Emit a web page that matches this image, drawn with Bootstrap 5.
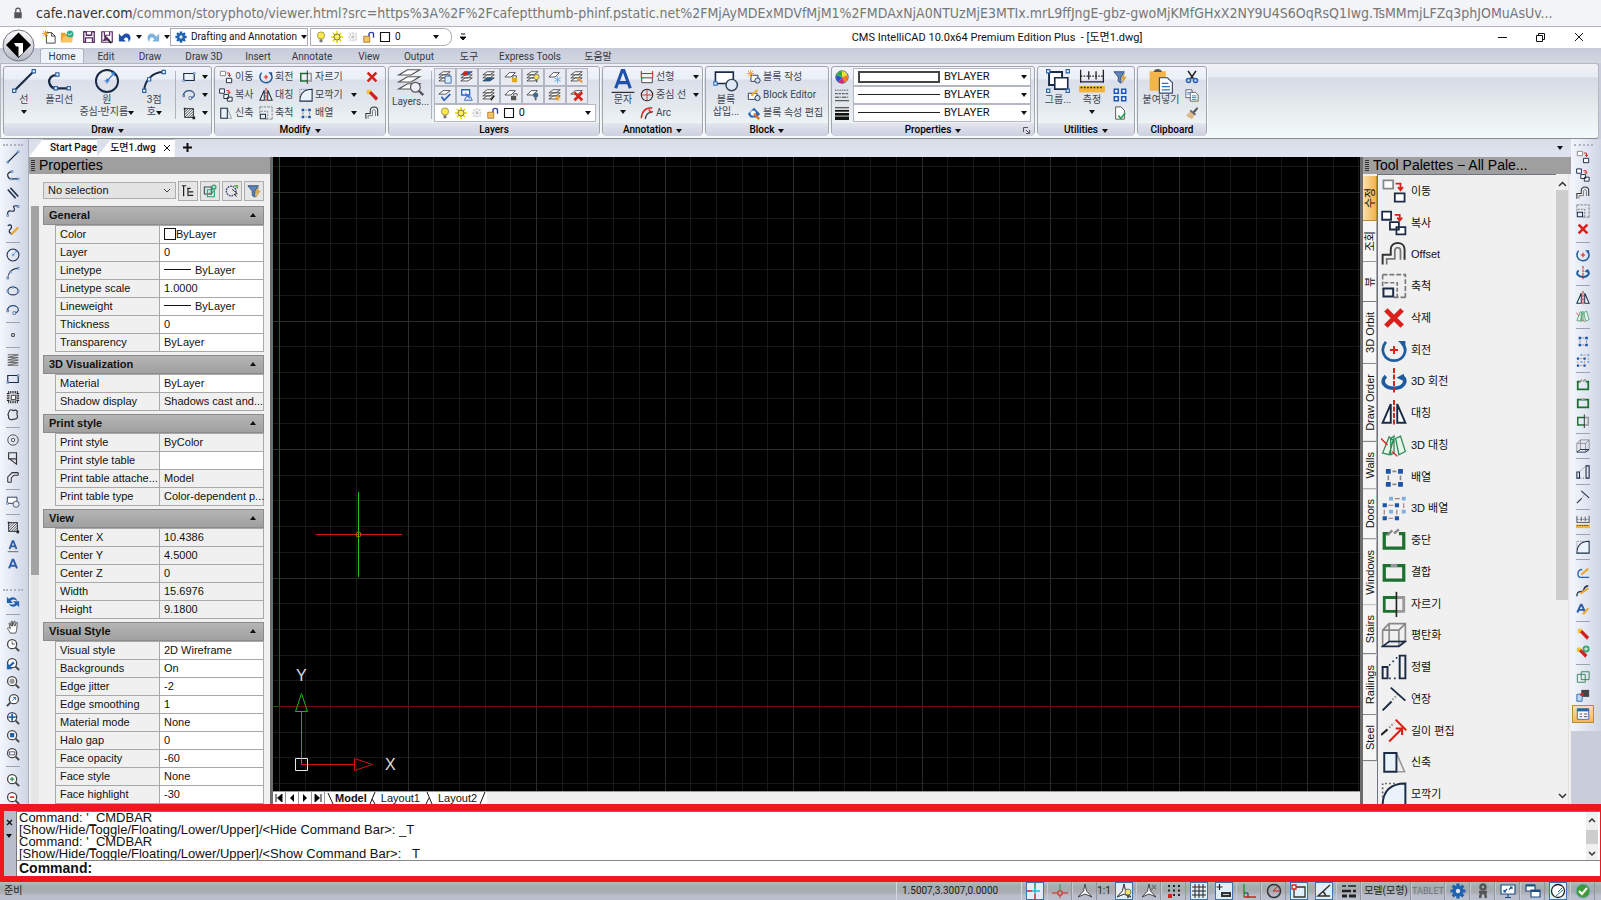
<!DOCTYPE html>
<html lang="ko">
<head>
<meta charset="utf-8">
<meta name="viewport" content="width=device-width, initial-scale=1">
<title>CMS IntelliCAD</title>
<link href="https://cdn.jsdelivr.net/npm/bootstrap@5.3.0/dist/css/bootstrap.min.css" rel="stylesheet">
<script src="https://cdn.jsdelivr.net/npm/bootstrap@5.3.0/dist/js/bootstrap.bundle.min.js"></script>
<style>
:root{--ui:Roboto,"Noto Sans CJK KR",sans-serif;--gulim:"Liberation Sans","Noto Sans CJK KR",sans-serif}
body{height:100vh;overflow:hidden;font:10px/12px var(--ui);color:#111;background:#c9cdd9}
button{border:0;background:none;padding:0;color:inherit;font:inherit}
a{color:inherit;text-decoration:none}
select{appearance:none;border:0;background:transparent;padding:0;color:inherit;font:inherit;outline:0}
svg{display:block;flex:none}
.i12{width:12px;height:12px}.i14{width:14px;height:14px}.i16{width:16px;height:16px}.i26{width:26px;height:26px}.i28{width:28px;height:28px}
.caret{width:0;height:0;border:3px solid transparent;border-top:4px solid #111;border-bottom:0;flex:none;display:inline-block}
.urlbar{height:27px;background:#f2f4f7;border-bottom:1px solid #b4b6ba;color:#777;font:14px/26px "DejaVu Sans Condensed","Open Sans",sans-serif;padding-left:12px}
.urlbar b{font-weight:400;color:#333}
.titlebar{height:21px;background:#fff;padding-left:42px}
.apptitle{font:11px/21px var(--ui);padding-left:30px}
.winbtns{gap:29px;padding-right:17px}
.qcombo{height:18px;border:1px solid #a9acb5;background:#fff}
.wspace{width:138px}.qlayer{width:142px;margin-left:2px;border-radius:0 8px 8px 0}
.appbtn{position:absolute;left:2px;top:29px;z-index:3}
.apptabs{height:15px;background:linear-gradient(#c8ccda,#d3d7e2);padding-left:40px;font:10px/17px var(--ui);color:#35383f}
.apptabs a{text-align:center}
.apptabs a.on{background:#eef3fb;border:1px solid #b0b4c0;border-bottom:0;border-radius:3px 3px 0 0;line-height:15px}
.w44{width:44px}.w64{width:64px}.w50{width:50px}.w72{width:72px}
.ribbon{height:76px;margin-right:2px;padding:2px 2px 3px;gap:2px;background:linear-gradient(#eef1f6 0,#e8ebf2 13px,#d6dae5 14px,#e9eeee 50px,#f3fbfa 74px);border:1px solid #b5b8c0;border-bottom:1px solid #888b92;border-radius:0 3px 3px 0}
.panelx{border:1px solid #a2a5ae;border-radius:3px;background:linear-gradient(#f1f4fa 0,#eaeef6 12px,#dadfeb 13px,#e4e9ee 40px,#eff6f6 58px);box-shadow:1px 1px 0 #f8f9fb}
.pw1{width:209px}.pw2{width:172px}.pw3{width:212px}.pw4{width:101px}.pw5{width:124px}.pw6{width:204px}.pw7{width:98px}.pw8{width:70px}
.ptitle{height:13px;font:500 10px/13px var(--ui);color:#000;background:linear-gradient(#e3e6ef,#cdd0de);border-radius:0 0 3px 3px;position:relative}
.pbody{height:56px;padding:1px 3px}
.big{color:#3f4450;line-height:12px;text-align:center;display:flex;flex-direction:column;align-items:center}
.vsep{width:1px;background:#aeb3c0;margin:3px 2px}
.trow{display:flex;align-items:center;gap:2px;height:18px;color:#3f4450;white-space:nowrap}
.w34{width:34px}.w38{width:38px}.w58{width:58px}.w40{width:40px}
.lbtn{width:22px;height:18px;border:1px solid #b3b7c3;background:#e8ebf2;display:flex;align-items:center;justify-content:center}
.pcombo{height:18px;background:#fff;border:1px solid #b3b7c3;padding-right:3px;font:11px/16px var(--ui)}
.colorbox{border:2px solid #444;width:82px;height:12px}
.rule{width:82px;height:1px;background:#222}
.doctabs{height:18px;background:linear-gradient(#d9dde8,#e0e4ee);font:500 10px/18px var(--ui)}
.doctab{background:#fff;border-top:1px solid #b5b8c4;display:flex;align-items:center;height:18px;gap:7px}
.cutl{clip-path:polygon(14px 0,100% 0,100% 100%,0 100%);padding-left:21px}
.cutl+.cutl{padding-left:13px}
.sidebar{background:linear-gradient(90deg,#f3f6fc,#dde2ef 60%,#cfd5e4)}
.side-l{width:29px;border-right:1px solid #a9aebc;padding-right:3px}
.side-r{padding:0 6px 8px 0}
.tgroup{display:flex;flex-direction:column;align-items:center;justify-content:space-between}
.g1{min-height:425px}.g2{min-height:214px}.g3{min-height:575px}
.tgroup button{height:18px;width:22px;display:flex;align-items:center;justify-content:center}
.tgroup button.on{background:linear-gradient(#f6dfae,#f1b95a);border:1px solid #b98b3d}
.tgroup hr{width:14px;height:1px;margin:3px 0;border:0;background:#9ea3b0;opacity:1}
.dots{height:0;border-top:2px dotted #aeb3c0;margin:5px 2px 2px 3px}
.ptop{background:#9f9f9f;height:17px;font:14px/17px var(--gulim);color:#000;padding-left:2px;gap:4px}
.grip{width:4px;height:11px;background:repeating-linear-gradient(#333 0 1px,transparent 1px 2px)}
.props{width:241px;background:#f0f0f0;font:11px/17px var(--gulim)}
.selrow{padding:7px 0 5px 14px;gap:2px}
.selbox{width:133px;height:17px;border:1px solid #adadad;background:#e3e3e3;padding:0 4px}
.sq20{width:20px;height:20px;border:1px solid #adadad;background:#e6e6e6;display:flex;align-items:center;justify-content:center}
.pscroll{width:8px;background:linear-gradient(#a3a3a3 0 369px,#e6e6e6 369px);margin-left:2px}
#sections{width:221px;margin-left:4px}
.sec{height:19px;border:1px solid #8b8b8b;background:linear-gradient(#b5b5b5,#a0a0a0);font:bold 11px/17px var(--gulim);padding:0 7px 0 5px;display:flex;justify-content:space-between;align-items:center;width:100%}
.up{border:3px solid transparent;border-bottom:4px solid #111;border-top:0}
.ptab{width:209px;table-layout:fixed;border-collapse:collapse;margin:0 0 3px 12px}
.ptab th,.ptab td{height:18px;padding:0 0 0 4px;line-height:16px;font-weight:400;border:1px solid #a8a8a8;white-space:nowrap}
.ptab th{background:#f0f0f0;width:104px}.ptab td{background:#fff}.ptab td.ro{background:#f0f0f0}
.swatch{display:inline-block;width:12px;height:12px;border:1px solid #111;vertical-align:-2px}
.dash{display:inline-block;width:27px;height:1px;background:#111;vertical-align:4px;margin-right:4px}
.canvasx{background:#000;min-height:0}
.edge{width:3px;background:#6d6d6d}
.laytabs{height:13px;background:#f0f0f0;font:11px/13px var(--gulim);border-top:1px solid #999}
.laytabs button{border-right:1px solid #999;width:13px;height:12px;display:flex;align-items:center;justify-content:center;background:#fff}
.slash{width:10px;height:12px}
.palette{width:208px;background:#f0f0f0}
.vt{width:14px;font:11px/14px var(--gulim);padding-top:2px}
.vt button{writing-mode:vertical-rl;text-orientation:sideways;transform:rotate(180deg);width:14px;padding:10px 0;min-height:40px;border-top:1px solid #777;border-left:1px solid #aaa;line-height:12px;background:#f6f6f6}
.vt button.on{background:linear-gradient(90deg,#f3b24c,#fbe0ae);min-height:45px;border-color:#c08b35}
.plist{margin:0 0 -6px;padding:0 0 0 3px;list-style:none;font:11px/14px var(--gulim)}
.plist li{flex:1 1 0;display:flex;align-items:center;gap:4px;min-height:0}
.plist svg{overflow:visible}
.track{width:13px;background:#f0f0f0;margin-right:2px;border-right:1px solid #e2e2e2}
.thumbx{flex:0 0 66%;background:#cdcdcd}
.side30{width:30px}
.cmd{height:78px;border:solid #ef161d;border-width:7px 1px 6px 4px;background:#fff;font:13px/12px var(--gulim)}
.gut{width:13px;background:#b9bcc9;border-right:1px solid #777;padding-right:2px}
.log{border-top:1px solid #777;border-bottom:1px solid #888;height:50px;white-space:pre;padding-left:2px;overflow:hidden}
.logbar{width:12px;background:#f0f0f0;margin-right:2px}.logbar div{width:12px;height:14px;background:#cdcdcd}
.cline{height:15px;font:bold 14px/15px var(--gulim);padding-left:2px}
.cline input{border:0;outline:0;padding:0;height:14px;font:13px/14px var(--gulim)}
.status{height:18px;background:linear-gradient(#b6b9c0 0,#a5aaad 5px,#a9adb1 10px,#bbbecd 14px);font:10px/18px var(--ui);color:#222;padding-right:6px}
.status button{width:25px;height:18px;border-left:1px solid #c7cad3;border-right:1px solid #92959c;display:flex;align-items:center;justify-content:center}
.status button.on{background:#dff0fb;border:1px solid #3d74ad;width:18px;margin:0 3px 0 4px}
.status button.txt{width:50px}
.status button.txt.s{width:34px;font-size:9px}
.status button.one{width:14px;border:0}
.coord{width:126px;margin-left:5px;border-left:1px solid #d5d7de;border-right:1px solid #d5d7de;padding-left:5px}
</style>
</head>
<body class="d-flex flex-column">
<svg width="0" height="0" class="position-absolute" aria-hidden="true"><defs>
<g id="stk" fill="#fff" stroke="#444" stroke-width="1"><path d="M1 12.500h8l5-3.500H6zM1 9h8l5-3.500H6zM1 5.500h8L14 2H6z"/></g>
<symbol id="line" viewBox="0 0 16 16" fill="#fff" stroke="#1c2b45"><path d="M2 14 14 2" stroke-width="1.300"/><path d="M1 13h2v2H1zM13 1h2v2h-2z" stroke="#2a62a8" stroke-width=".7"/></symbol>
<symbol id="pline" viewBox="0 0 16 16" fill="none" stroke="#1c2b45"><path d="M7 4.500C3 4 1.500 7 2 9s2 3.500 4 3.500h8" stroke-width="1.400"/><path d="M6 3h2v2H6zM5 11.500h2v2H5zM13 11.500h2v2h-2z" fill="#fff" stroke="#2a62a8" stroke-width=".7"/></symbol>
<symbol id="circle" viewBox="0 0 16 16" fill="none" stroke="#1c2b45"><circle cx="8" cy="8" r="6.800" stroke-width="1.200"/><path d="m8 8 4.500-5M6.500 8h3M8 6.500v3M10.500 3h2v2" stroke="#2a72c8" stroke-width=".7"/></symbol>
<symbol id="arc" viewBox="0 0 16 16" fill="none" stroke="#1c2b45"><path d="M2 14C2 8 7 2.500 14 2.500" stroke-width="1.200"/><path d="M1 13h2v2H1zM4 6h2v2H4zM13 1.500h2v2h-2z" fill="#fff" stroke="#2a62a8" stroke-width=".7"/></symbol>
<symbol id="rect" viewBox="0 0 16 16" fill="none" stroke="#1c2b45"><path d="M2 4h12v8H2z" stroke-width="1.300"/><path d="M1 11h2v2H1zM13 3h2v2h-2z" fill="#fff" stroke="#2a62a8" stroke-width=".7"/></symbol>
<symbol id="earc" viewBox="0 0 16 16" fill="none" stroke="#2a4f86" stroke-width="1.400"><path d="M2 9C1 5 5 3 8 3s7 2 6 5.500c-.5 2-3 3-5 3"/><path d="M1 8h2v2H1zM8 10h3v3H8z" fill="#fff" stroke-width=".8"/></symbol>
<symbol id="ellipse" viewBox="0 0 16 16" fill="none" stroke="#2a3f66" stroke-width="1.300"><ellipse cx="8" cy="8" rx="6" ry="4.500"/><path d="M1 7h2v2H1zM7 2.500h2v2H7zM13 7h2v2h-2z" fill="#fff" stroke="#2a62a8" stroke-width=".7"/></symbol>
<symbol id="hatch" viewBox="0 0 16 16" fill="none" stroke="#222"><path d="M3 3h10v10H3z"/><path d="m3 7 4-4M3 10l7-7M3 13 13 3M6 13l7-7M9 13l4-4" stroke-width=".8"/><path d="M2 2h2v2H2zM12 12h3v3h-3z" fill="#222" stroke="none"/></symbol>
<symbol id="move" viewBox="0 0 16 16" fill="#fff" stroke="#1c2b45" stroke-width="1.100"><path d="M1.500 1.500h6v5h-6z" stroke="#888"/><path d="M8.500 9.500h6v5h-6z"/><path d="M9 3.500h3V7M10.500 5.500 12 7.500l1.500-2" fill="none" stroke="#d9201a"/></symbol>
<symbol id="copy" viewBox="0 0 16 16" fill="#fff" stroke="#1c2b45" stroke-width="1.100"><path d="M.7 1h5.500v5H.7zM5.500 7.500H11V12H5.500zM9.500 10.500H15V15H9.500z"/><path d="M8.500 3h3v3M10 4.700l1.500 1.800L13 4.700" fill="none" stroke="#d9201a"/></symbol>
<symbol id="offset" viewBox="0 0 16 16" fill="none" stroke="#333"><path d="M1 14.500V8.500h5V5c0-5 8.500-5 8.500 0v6.500" stroke-width="1.200"/><path d="M3.500 14.500V11H8.500V6c0-2.500 3.500-2.500 3.500 0v5.500" stroke="#777" stroke-width="1.100"/></symbol>
<symbol id="scale" viewBox="0 0 16 16" fill="none" stroke="#777"><path d="M1 1h14v14" stroke-dasharray="3 1.200"/><path d="M1 1v9M15 15H8" stroke-dasharray="3 1.200"/><path d="M2 6h8v9" stroke-dasharray="2.500 1.200"/><path d="M1.500 9.500h6v5h-6z" stroke="#1c2b45" stroke-width="1.200"/></symbol>
<symbol id="del" viewBox="0 0 16 16"><path d="m3 3 10 10M13 3 3 13" stroke="#d9201a" stroke-width="3"/></symbol>
<symbol id="rot" viewBox="0 0 16 16" fill="none"><path d="M3 3C-1 8 2 14.500 8 14.500S17 8 13 4" stroke="#1f5c9e" stroke-width="1.700"/><path d="M10.500 2.500H15V7z" fill="#1f5c9e"/><path d="M8 5.500v5M5.500 8h5" stroke="#d9201a" stroke-width="1.200"/></symbol>
<symbol id="rot3" viewBox="0 0 16 16" fill="none"><path d="M3 5C-1 9 3 12.500 8 12.500S17 8.500 13 5" stroke="#1f5c9e" stroke-width="2.200"/><path d="M9.500 6 14 3.500V8z" fill="#1f5c9e"/><path d="M8 0v16" stroke="#d9201a" stroke-width="1.200" stroke-dasharray="3 1"/></symbol>
<symbol id="mir" viewBox="0 0 16 16" fill="#fff" stroke="#1c2b45" stroke-width="1.200"><path d="M6 2.500V14H1zM10 2.500V14h5z"/><path d="M8 0v16" stroke="#d9201a" stroke-dasharray="3 1"/></symbol>
<symbol id="mir3" viewBox="0 0 16 16" fill="#e6f5ea" stroke="#2e8b57" stroke-width=".8"><path d="m1 13 4-10 2.500 2L5 14zM6 14V4l2-1.500V13zM9 4l3-1.500L15 12l-4 2z"/><path d="m0 4 4 4M7 12l3 3" stroke="#d9201a"/></symbol>
<symbol id="array" viewBox="0 0 16 16"><path d="M3 3h3v3H3zM10.500 3h3v3h-3zM3 11h3v3H3zM10.500 11h3v3h-3z" fill="#1f55a8"/><path d="M7 4.500h2.500M7 12.500h2.500M4.500 7v3M12 7v3" stroke="#888"/></symbol>
<symbol id="array3" viewBox="0 0 16 16"><path d="M1 5h2.600v2.600H1zM8.500 5h2.600v2.600H8.500zM1 13h2.600v2.600H1zM8.500 13h2.600v2.600H8.500z" fill="#1f55a8"/><path d="M5 1h2.400v2.400H5zM12.800 1h2.400v2.400h-2.400zM5 9h2.400v2.400H5zM12.800 9h2.400v2.400h-2.400z" fill="#7fb0e0"/><path d="M4.500 6.300h3M4.500 14.300h3M2 9v3M9.700 9v3M8.500 2.200h3M14 5v3" stroke="#a77" stroke-width=".7"/></symbol>
<symbol id="brk" viewBox="0 0 16 16" fill="none"><path d="M5 4H2v9h12V4h-3" stroke="#1d7030" stroke-width="2"/><path d="m4 5 3-3M8 4l3-2.500" stroke="#888" stroke-width="1.500"/></symbol>
<symbol id="joi" viewBox="0 0 16 16" fill="none"><path d="M2 4h12v9H2z" stroke="#1d7030" stroke-width="2"/><path d="M6 4h4" stroke="#999" stroke-width="2"/></symbol>
<symbol id="trim" viewBox="0 0 16 16" fill="none" stroke-width="1.700"><path d="M9.500 4H14v8.500H9.500" stroke="#999"/><path d="M9.500 4H2v8.500h7.500" stroke="#1d7030"/><path d="M9.500.5v15.500" stroke="#222" stroke-width="1"/></symbol>
<symbol id="flat" viewBox="0 0 16 16" fill="none" stroke="#888" stroke-width="1"><path d="M1 5h10v10M1 15V5l4-4h10v10l-4 4M11 5l4-4M5 1v11h10"/><path d="m1 15 4-3h10l-4 3z" stroke="#1c2b45"/></symbol>
<symbol id="align" viewBox="0 0 16 16" fill="none" stroke="#1c2b45" stroke-width="1.200"><path d="M1 8h3v7H1zM11.500 1H15v14h-3.500z"/><path d="m5 7 5-5M5 15h5" stroke-dasharray="1 2" stroke-width="1"/></symbol>
<symbol id="ext" viewBox="0 0 16 16" fill="none" stroke="#1c2b45" stroke-width="1.200"><path d="m6 1 9 8M1 15l5.500-5.500"/><path d="m7 8.500 3-3" stroke="#999" stroke-dasharray="1 1"/></symbol>
<symbol id="len" viewBox="0 0 16 16" fill="none" stroke="#d9201a" stroke-width="1.300"><path d="m9 1 6.500 6.500M5 14.500l8-8M9 6.500h4v4"/><path d="m0 10.500 4-3.500" stroke="#222"/><path d="m5 6 3-3" stroke="#999" stroke-dasharray="1 1"/></symbol>
<symbol id="str" viewBox="0 0 16 16" fill="#e9f1fb" stroke="#1c2b45"><path d="m9.500 2.500 5 11.500h-5" fill="none" stroke="#999"/><path d="M2 2.500h7.500V14H2z" stroke-width="1.200"/></symbol>
<symbol id="fil" viewBox="0 0 16 16" fill="#eaf3fc" stroke="#1c2b45" stroke-width="1.200"><path d="M1 15C1 6 6 1.500 15 1.500V15z"/><path d="M1 10V1.500h8" fill="none" stroke="#555" stroke-dasharray="1 1.500" stroke-width="1"/></symbol>
<symbol id="expl" viewBox="0 0 16 16"><path d="M2 2h5v5H2z" fill="#f4c531"/><path d="m4.500 6 2.500-2.500 8 8-2.500 3z" fill="#d02020"/></symbol>
<symbol id="explp" viewBox="0 0 16 16"><path d="M1 3h5v5H1z" fill="#f4c531"/><path d="m3.500 7 2.500-2.500 7 7-2.500 3z" fill="#d02020"/><circle cx="11.500" cy="4.500" r="4" fill="#2ba36c"/><path d="M9 4.500h5M11.500 2v5" stroke="#fff"/></symbol>
<symbol id="layers" viewBox="0 0 16 16" fill="#fff" stroke="#555" stroke-width=".7"><path d="M1 12h7l5-3H6zM1 8h7l5-3H6zM1 4h7l5-3H6z"/><circle cx="10.500" cy="11" r="2.800" fill="#eef"/><path d="m12.500 13 2.500 2.500" stroke-width="1.400"/></symbol>
<symbol id="l1" viewBox="0 0 16 16"><use href="#stk"/><path d="M8 7h7v8H8z" fill="#dfeaf8" stroke="#2a62a8"/></symbol>
<symbol id="l2" viewBox="0 0 16 16"><use href="#stk"/><path d="M1 5.500h8L14 2H6z" fill="#2a62a8"/><circle cx="6" cy="4" r="2.500" fill="#d9201a"/></symbol>
<symbol id="l3" viewBox="0 0 16 16"><use href="#stk"/><path d="M1 12.500h8l5-3.500H6z" fill="#1f5c8e"/></symbol>
<symbol id="l4" viewBox="0 0 16 16"><path d="M1 8h7l5-5H6z" fill="#fff" stroke="#444"/><path d="M9 9h6v5H9z" fill="#e3a918"/><path d="M10 9V6.500h4V9" stroke="#555" fill="none"/></symbol>
<symbol id="l5" viewBox="0 0 16 16"><use href="#stk"/><circle cx="12" cy="8" r="3" fill="#f7e05a" stroke="#887"/><path d="M11 11h2v3h-2z" fill="#555"/></symbol>
<symbol id="l6" viewBox="0 0 16 16"><path d="M1 8h7l5-5H6z" fill="#fff" stroke="#444"/><path d="M11 7v8M7.500 9l7 4M14.500 9l-7 4" stroke="#5fa8e8"/></symbol>
<symbol id="l7" viewBox="0 0 16 16"><use href="#stk"/><path d="m8 9 6 5" stroke="#d89a4a" stroke-width="2.500"/></symbol>
<symbol id="l8" viewBox="0 0 16 16"><path d="M1 7h8l5-4H6z" fill="#fff" stroke="#444"/><path d="m4 10 3 4 7-7" stroke="#2a62b8" stroke-width="2" fill="none"/></symbol>
<symbol id="l9" viewBox="0 0 16 16"><path d="M2 2h9v6H2z" fill="#fff" stroke="#2a62b8" stroke-width="1.500"/><path d="m6 5 5 7M5 14h9l-2-4H7z" stroke="#2a62b8" fill="#dfeaf8"/></symbol>
<symbol id="l10" viewBox="0 0 16 16"><use href="#stk"/><path d="M10 14l4-5" stroke="#111" stroke-width="1.500"/></symbol>
<symbol id="l11" viewBox="0 0 16 16"><path d="M1 8h7l5-5H6z" fill="#fff" stroke="#444"/><path d="M8 9h6v5H8z" fill="#555"/><path d="M11 9V6.500h4V9" stroke="#555" fill="none"/></symbol>
<symbol id="l12" viewBox="0 0 16 16"><path d="M1 8h7l5-5H6z" fill="#fff" stroke="#444"/><circle cx="11" cy="8" r="3" fill="#456a8c"/><path d="M10 11h2v3h-2z" fill="#555"/></symbol>
<symbol id="l13" viewBox="0 0 16 16"><use href="#stk"/><path d="M11 8v7M7.500 11.500h7M9 9l4 5M13 9l-4 5" stroke="#f0a020"/></symbol>
<symbol id="l14" viewBox="0 0 16 16"><path d="M1 7h8l5-4H6z" fill="#fff" stroke="#444"/><path d="m5 5 9 9M14 5l-9 9" stroke="#d9201a" stroke-width="3"/></symbol>
<symbol id="bulb" viewBox="0 0 16 16"><circle cx="8" cy="6" r="4.800" fill="#fbe94e" stroke="#8a8430"/><path d="M6 11h4v4H6z" fill="#777"/></symbol>
<symbol id="sun" viewBox="0 0 16 16"><path d="M8 0v16M0 8h16M2.500 2.500l11 11M13.500 2.500l-11 11" stroke="#e8d800" stroke-width="2"/><circle cx="8" cy="8" r="4" fill="#fff04a" stroke="#555"/></symbol>
<symbol id="frz" viewBox="0 0 16 16"><path d="M3 3h10v10H3z" fill="none" stroke="#bbb" stroke-dasharray="1 1"/><path d="M8 2v12M2 8h12M4 4l8 8M12 4l-8 8" stroke="#aaa" stroke-dasharray="2 1"/></symbol>
<symbol id="unl" viewBox="0 0 16 16"><path d="M1 7h8v8H1z" fill="#f2c46a" stroke="#a06a10"/><path d="M8 7V4c0-3 6-3 6 0v5" fill="none" stroke="#2a3f9a" stroke-width="1.800"/></symbol>
<symbol id="wsq" viewBox="0 0 16 16"><path d="M2 2h12v12H2z" fill="#fff" stroke="#111" stroke-width="1.500"/></symbol>
<symbol id="bigA" viewBox="0 0 16 16" fill="none" stroke="#2050a8"><path d="m3.500 12.500 4-11h1l4 11M5 9h6" stroke-width="1.900"/><path d="M1 15h14" stroke="#222" stroke-width=".7"/></symbol>
<symbol id="smA" viewBox="0 0 16 16" fill="none" stroke="#2a5caa" stroke-width="2.200"><path d="m3.500 13 4-10h1l4 10M5 10h6"/></symbol>
<symbol id="undA" viewBox="0 0 16 16" fill="none" stroke="#2a5caa" stroke-width="2"><path d="m4 11.500 3.500-9h1l3.500 9M5 8.500h6"/><path d="M2 14.500h12" stroke="#555" stroke-width="1"/></symbol>
<symbol id="dim" viewBox="0 0 16 16" fill="none" stroke="#d9201a"><path d="M1.500 1v8M14.500 1v8M1.500 4h13" stroke-width="1.200"/><path d="M2 9h12v5.500H2z" fill="#fff" stroke="#333"/></symbol>
<symbol id="ctr" viewBox="0 0 16 16" fill="none" stroke="#222"><circle cx="8" cy="8" r="6.500" stroke-width="1.200"/><path d="M8 1v14M1 8h14" stroke="#d9201a"/></symbol>
<symbol id="adim" viewBox="0 0 16 16" fill="none" stroke="#d9201a" stroke-width="1.500"><path d="M1.500 14C2 6 6 2 14 2"/><path d="M6 15c.5-5 3-8 9-8.500" stroke="#444"/><path d="M10 4l3 4" /></symbol>
<symbol id="blk" viewBox="0 0 16 16" fill="#fff" stroke="#1c2b45"><path d="M1.500 2.500h11v7h-11z"/><circle cx="11.500" cy="10.500" r="3.500" fill="#e0e9f4" stroke="#345" stroke-width=".9"/><path d="M.5 8.500h2v2h-2z" stroke="#2a72c8" stroke-width=".7"/></symbol>
<symbol id="blkn" viewBox="0 0 16 16" fill="#fff" stroke="#1c2b45"><path d="M4.500 6h8v7h-8z"/><circle cx="12" cy="12" r="3" fill="#cfe0f2"/><path d="M4 0v8M0 4h8M1 1l6 6M7 1 1 7" stroke="#f0a020"/></symbol>
<symbol id="blke" viewBox="0 0 16 16" fill="#fff" stroke="#1c2b45"><path d="M1.500 6h10v7h-10z"/><circle cx="12" cy="11.500" r="3" fill="#cfe0f2"/><path d="M5 9l7-7" stroke="#e8b23a" stroke-width="2.500"/></symbol>
<symbol id="blka" viewBox="0 0 16 16"><path d="m1 9 7-7 7 7-4 4H4z" fill="#2a62b8"/><circle cx="7" cy="8" r="3" fill="#fff"/><path d="m8 9 6 6" stroke="#e07020" stroke-width="2.500"/></symbol>
<symbol id="wheel" viewBox="0 0 16 16"><circle cx="8" cy="8" r="7" fill="#eee" stroke="#333"/><path d="M8 8V1.500A6.500 6.500 0 0 1 14 6z" fill="#f4e02a"/><path d="m8 8 6-2a6.500 6.500 0 0 1-3 8z" fill="#f08020"/><path d="m8 8 3 6a6.500 6.500 0 0 1-7 0z" fill="#d02a80"/><path d="m8 8-4 6A6.500 6.500 0 0 1 1.800 6z" fill="#2a50d0"/><path d="M8 8 1.800 6A6.500 6.500 0 0 1 8 1.500z" fill="#2ab04a"/></symbol>
<symbol id="ltyp" viewBox="0 0 16 16" stroke="#222"><path d="M0 2.500h16" stroke-dasharray="1 1"/><path d="M0 6.500h16" stroke-dasharray="3 1"/><path d="M0 10.500h16" stroke-dasharray="5 1 1 1"/><path d="M0 14.500h16"/></symbol>
<symbol id="lwt" viewBox="0 0 16 16" stroke="#111"><path d="M0 2h16"/><path d="M0 5.500h16" stroke-width="2"/><path d="M0 9.500h16" stroke-width="3"/><path d="M0 14h16" stroke-width="4"/></symbol>
<symbol id="grp" viewBox="0 0 16 16" fill="#fff" stroke="#1c2b45"><path d="M2.500 2.500h8v8h-8z" stroke-width="1.200"/><path d="M6 6h8v7H6z" stroke-width="1"/><path d="M1 1h2v2H1zM13 1h2v2h-2zM1 13h2v2H1zM13 13h2v2h-2z" stroke="#2a62a8" stroke-width=".7"/></symbol>
<symbol id="meas" viewBox="0 0 16 16" fill="none" stroke="#222"><path d="M1 1v8M15 1v8M1 8.500h14M6 2v5M10.500 2v5" stroke-width=".8"/><path d="M1 5h14" stroke-dasharray="1 .8" stroke-width=".7"/><path d="M0 11h16v4H0z" fill="#f2b43a" stroke="none"/><path d="M1 12h14" stroke-dasharray="1 1"/></symbol>
<symbol id="fun" viewBox="0 0 16 16"><path d="M1 2h12L9 8v7l-3-2V8z" fill="#5f85b8" stroke="#2a4a7a"/><path d="m13 4-4 6h3l-2 5 5-7h-3z" fill="#f2b43a" stroke="#a07010" stroke-width=".5"/></symbol>
<symbol id="gb" viewBox="0 0 16 16" fill="#fff" stroke="#1f55b8" stroke-width="1.800"><path d="M1.500 1.500H6V6H1.500zM10 1.500h4.500V6H10zM1.500 10H6v4.500H1.500zM10 10h4.500v4.500H10z"/></symbol>
<symbol id="dchk" viewBox="0 0 16 16" fill="#fff" stroke="#444"><path d="M3 1h6l4 4v10H3z"/><path d="m6 11 3 3 5-6" stroke="#2e9b57" stroke-width="2" fill="none"/></symbol>
<symbol id="paste" viewBox="0 0 16 16"><path d="M1 2h10v12H1z" fill="#f3b548"/><path d="M3.500 2.500C3.500 0 8.500 0 8.500 2.500z" fill="#555"/><path d="M7 6h5l3 3v6.500H7z" fill="#fff" stroke="#346" stroke-width=".7"/><path d="M8.500 9.500h4M8.500 11.500h5M8.500 13.500h5" stroke="#2a72c8" stroke-width=".7"/></symbol>
<symbol id="scis" viewBox="0 0 16 16" fill="none" stroke="#222" stroke-width="1.800"><path d="m3.500 1 6 9M12.500 1l-6 9"/><circle cx="4" cy="12" r="2.300" stroke="#1f5fc0"/><circle cx="12" cy="12" r="2.300" stroke="#1f5fc0"/></symbol>
<symbol id="cdoc" viewBox="0 0 16 16" fill="#fff" stroke="#556"><path d="M1 2h7v9H1z"/><path d="M6 5h6l3 3v7H6z"/><path d="M8 9h5M8 11h5M8 13h5M2.500 5h3M2.500 7h3" stroke="#2a72c8"/></symbol>
<symbol id="brush" viewBox="0 0 16 16"><path d="m9 6 5-5 1 2-4 5z" fill="#555"/><path d="m1 11 6-6 5 4-4 6z" fill="#e0b98a"/><path d="m6 5 6 5" stroke="#666" stroke-width="2"/></symbol>
<symbol id="newd" viewBox="0 0 16 16"><path d="M5 3h6l4 4v8H5z" fill="#fff" stroke="#333"/><path d="M11 3v4h4" fill="none" stroke="#333"/><path d="M4 0v8M0 4h8M1 1l6 6M7 1 1 7" stroke="#f0a020"/></symbol>
<symbol id="open" viewBox="0 0 16 16"><path d="M1 3h5l1 2h7v9H1z" fill="#e8a23a"/><path d="m1 14 3-7h11l-2 7z" fill="#f7c765"/><circle cx="11.500" cy="4.500" r="4" fill="#2fa98a"/><path d="m9 4 2 2 3-3" stroke="#fff" fill="none"/></symbol>
<symbol id="save" viewBox="0 0 16 16" fill="#fff" stroke="#5b2a66" stroke-width="1.500"><path d="M2 2h12v12H2z"/><path d="M5 2v4h6V2M4 14V9h8v5"/></symbol>
<symbol id="saveas" viewBox="0 0 16 16" fill="#fff" stroke="#5b2a66" stroke-width="1.400"><path d="M2 2h12v12H2z"/><path d="M5 2v4h6V2"/><path d="m5 7 8 8" stroke="#222" stroke-width="2"/><path d="M4 12l3-4 3 3z" fill="#5b2a66"/></symbol>
<symbol id="undo" viewBox="0 0 16 16"><path d="M1 4v9h8L6.500 10.500C9 7 12.500 8 12 14c5-5 1-12-4.500-9.500-1.500.7-2.500 2-3.500 3z" fill="#1f4fa8"/></symbol>
<symbol id="redo" viewBox="0 0 16 16"><path d="M15 4v9H7l2.500-2.500C7 7 3.500 8 4 14c-5-5-1-12 4.500-9.500 1.500.7 2.500 2 3.500 3z" fill="#7fb4dd"/></symbol>
<symbol id="gear" viewBox="0 0 16 16"><path d="M8 .5v15M.5 8h15M2.700 2.700l10.600 10.600M13.300 2.700 2.700 13.300" stroke="#1f62b0" stroke-width="3.200"/><circle cx="8" cy="8" r="5.500" fill="#1f62b0"/><circle cx="8" cy="8" r="2.200" fill="#dfe6f0"/></symbol>
<symbol id="lock" viewBox="0 0 16 16"><path d="M3 7h10v8H3z" fill="#555"/><path d="M5 7V4.500c0-4 6-4 6 0V7" fill="none" stroke="#555" stroke-width="1.600"/></symbol>
<symbol id="par" viewBox="0 0 16 16" stroke="#1c2b45" stroke-width="1.800"><path d="m2 4 9 10M5 2l9 10"/></symbol>
<symbol id="spl" viewBox="0 0 16 16" fill="none" stroke="#1c2b45" stroke-width="1.400"><path d="M2 14c-1-5 1-7 4-6s5-1 3-4 5-2 5-1"/><path d="M1 12h2v2H1zM13 2h2v2h-2z" fill="#fff" stroke="#2a62a8" stroke-width=".7"/></symbol>
<symbol id="free" viewBox="0 0 16 16" fill="none" stroke="#1c2b45" stroke-width="1.400"><path d="M2 3c5-3 5 2 3 4s-2 4 2 6"/><path d="m6 13 8-8" stroke="#e8a93a" stroke-width="2.500"/></symbol>
<symbol id="pt" viewBox="0 0 16 16"><path d="M6.500 6.500h3v3h-3z" fill="#fff" stroke="#222"/></symbol>
<symbol id="helix" viewBox="0 0 16 16" fill="none" stroke="#555"><path d="M2 2h12L2 5h12L2 8h12L2 11h12L2 14h12" stroke-width="1"/></symbol>
<symbol id="rgn" viewBox="0 0 16 16" fill="none" stroke="#222"><path d="M2.500 2.500h11v11h-11z" stroke-width="3" stroke-dasharray="1 1"/><path d="M6 6h5v5H6z" fill="#fff"/></symbol>
<symbol id="cloud" viewBox="0 0 16 16" fill="none" stroke="#333" stroke-width="1.300"><path d="M4 3c2-2 4 0 4 0s5-2 5 2c-2 2 1 3 0 6-2 3-4 1-5 2-3 1-6-1-5-4-2-2 0-3 1-6z"/></symbol>
<symbol id="donut" viewBox="0 0 16 16" fill="none" stroke="#444"><circle cx="8" cy="8" r="6"/><circle cx="8" cy="8" r="2"/></symbol>
<symbol id="wipe" viewBox="0 0 16 16" fill="none" stroke="#333" stroke-width="1.300"><path d="M3 2h9v7H3zM12 9v6L4 9"/></symbol>
<symbol id="mline" viewBox="0 0 16 16" fill="none" stroke="#333" stroke-width="1.200"><path d="M2 14V8l5-5h7M6 14V9l3-3h5M2 14h4M14 3v3"/></symbol>
<symbol id="regen" viewBox="0 0 16 16" fill="#1f62b0"><path d="M1 2v7h7L5.500 6.500C8 4 11 5 13 7 12 3 7 1 3.500 4.500z"/><path d="M15 14V7H8l2.500 2.500C8 12 5 11 3 9c1 4 6 6 9.500 2.500z"/></symbol>
<symbol id="hand" viewBox="0 0 16 16" fill="#fff" stroke="#444"><path d="M5 15c-1-3-4-5-3-6s2 0 3 1L3.500 4c0-1 1-1 1.500 0L6 7V2c0-1 1.500-1 1.500 0v5L9 2c0-1 1.500-1 1.500 0L10 7l2-4c.5-1 1.500 0 1 1-1 4 0 7-2 11z"/></symbol>
<symbol id="zm" viewBox="0 0 16 16" fill="#fff" stroke="#444" stroke-width="1.500"><circle cx="7" cy="7" r="5.200"/><path d="m11 11 4 4" stroke-width="2.200"/></symbol>
<symbol id="z1" viewBox="0 0 16 16"><use href="#zm"/><path d="M7 4v3h3" stroke="#444" fill="none"/></symbol>
<symbol id="z2" viewBox="0 0 16 16"><use href="#zm"/><path d="M1 7v7h6L5 11l5-4-2-2-4 4z" fill="#1f62b0"/></symbol>
<symbol id="z3" viewBox="0 0 16 16"><use href="#zm"/><circle cx="7" cy="7" r="3" fill="#999"/></symbol>
<symbol id="z4" viewBox="0 0 16 16"><circle cx="9" cy="7" r="5.200" fill="#fff" stroke="#444" stroke-width="1.500"/><path d="m5 11-4 4" stroke="#444" stroke-width="2.200"/><path d="m7 9 4-4M8 5h3v3" stroke="#1f62b0" fill="none"/></symbol>
<symbol id="z5" viewBox="0 0 16 16"><use href="#zm"/><path d="M7 3v8M3 7h8" stroke="#1f62b0" stroke-width="2"/></symbol>
<symbol id="z6" viewBox="0 0 16 16"><use href="#zm"/><path d="M4.500 4.500h5v5h-5z" fill="#1f62b0"/></symbol>
<symbol id="z7" viewBox="0 0 16 16"><use href="#zm"/><path d="M4 5.500h6v3.500H4z" stroke="#446" fill="none"/></symbol>
<symbol id="z8" viewBox="0 0 16 16"><use href="#zm"/><path d="M7 4.500v5M4.500 7h5" stroke="#2a9050" stroke-width="1.500"/></symbol>
<symbol id="z9" viewBox="0 0 16 16"><use href="#zm"/><path d="M4.500 7h5" stroke="#d9201a" stroke-width="1.800"/></symbol>
<symbol id="pe1" viewBox="0 0 16 16" fill="none"><path d="M7 4C1 4 1 13 5 13h10" stroke="#2a62a8" stroke-width="1.500"/><path d="m6 10 8-7" stroke="#e8a93a" stroke-width="2.500"/></symbol>
<symbol id="pe2" viewBox="0 0 16 16" fill="none"><path d="M1 14c0-8 5-4 7-6s0-5 6-6" stroke="#1c2b45" stroke-width="1.500"/><path d="m5 11 9-6" stroke="#e8a93a" stroke-width="2.500"/></symbol>
<symbol id="pe3" viewBox="0 0 16 16" fill="none"><path d="m1.500 12 4-9h1l4 9M3 9h6" stroke="#2a5caa" stroke-width="2.200"/><path d="m8 14 6-7" stroke="#e8a93a" stroke-width="2.500"/></symbol>
<symbol id="ord" viewBox="0 0 16 16" fill="none" stroke="#2e7d4f"><path d="M1.500 5h9v9h-9zM6 2h9v9H6z"/></symbol>
<symbol id="ord2" viewBox="0 0 16 16"><path d="M6 1h9v8H6z" fill="#444"/><path d="M1 6h6v8H1z" fill="#bcd7f0" stroke="#2a62a8"/><path d="M5 5h4v3H5z" fill="#d9201a"/></symbol>
<symbol id="prop" viewBox="0 0 16 16"><path d="M1.500 2h13v12h-13z" fill="#fff" stroke="#2a62a8"/><path d="M1.500 2h13v3h-13z" fill="#2a62a8"/><path d="M4 8h3M9 8h4M4 11h3M9 11h4" stroke="#333"/></symbol>
<symbol id="tree" viewBox="0 0 16 16" stroke="#222" stroke-width="1.400" fill="none"><path d="M1 2h5M3 2v12M7 5h4M8 5v9M9 9h5M9 13h5"/></symbol>
<symbol id="selp" viewBox="0 0 16 16" fill="none" stroke="#345" stroke-width="1.200"><path d="M1.500 3.500h8v8h-8z"/><path d="M5 6.500h8v8H5z" stroke="#2ba36c"/><path d="m7 10 2 2 3-4" stroke="#2ba36c" stroke-width="1.400"/><circle cx="12.500" cy="3.500" r="3" fill="#2ba36c" stroke="none"/><path d="M11 3.500h3M12.500 2v3" stroke="#fff" stroke-width="1"/></symbol>
<symbol id="qs" viewBox="0 0 16 16" fill="none" stroke="#347"><circle cx="7" cy="8" r="5.500" stroke-dasharray="2 1" stroke-width="1.500"/><path d="m8 6 6 5-3 .500 2 3" fill="#fff" stroke="#222"/><path d="M10 1h5v5z" fill="#6aa84f" stroke="none"/></symbol>
<symbol id="s1" viewBox="0 0 16 16" fill="none"><path d="M0 8h5M8 11v5" stroke="#d9201a" stroke-width="1.500"/><path d="M8 0v6" stroke="#2a9a3a" stroke-width="1.500"/><path d="M5 8h8M8 5v6" stroke="#2ab5d8" stroke-width="1.500"/></symbol>
<symbol id="s2" viewBox="0 0 16 16" fill="none" stroke="#d9201a"><path d="M0 10h6M10 10h6M6 8h4v4H6zM8 12v3"/><path d="M8 1v7" stroke="#2a9a3a"/></symbol>
<symbol id="s3" viewBox="0 0 16 16" fill="#fff" stroke="#444"><path d="M8 1 6.500 8 1 14l7-3 7 3-5.500-6z"/></symbol>
<symbol id="s4" viewBox="0 0 16 16"><use href="#s3"/><path d="M8 1 6.500 8 1 14l7-3 7 3-5.500-6z" fill="#fff" stroke="#444"/><circle cx="12" cy="9" r="3" fill="#f7e45a" stroke="#776"/><path d="M11 12h2v3h-2z" fill="#555"/></symbol>
<symbol id="s5" viewBox="0 0 16 16"><path d="M8 1 6.500 8 1 14l7-3 7 3-5.500-6z" fill="#fff" stroke="#444"/><path d="m9 8 6-6M11 2l4 4" stroke="#777" stroke-width="1.500"/></symbol>
<symbol id="s6" viewBox="0 0 16 16"><path d="M3 2v12M8 2v12M13 2v12" stroke="#222" stroke-width="2" stroke-dasharray="2 2.500"/><path d="M2 11h4v4H2z" fill="#d9201a"/></symbol>
<symbol id="s7" viewBox="0 0 16 16"><path d="M4 1v14M8 1v14M12 1v14M1 4h14M1 8h14M1 12h14" stroke="#222"/></symbol>
<symbol id="s8" viewBox="0 0 16 16"><path d="M3.500 1v6M.5 4h6" stroke="#222" stroke-width="1.200"/><path d="M5 9h10v5H5z" fill="#333"/><path d="M7 11.500h6" stroke="#ccc"/></symbol>
<symbol id="s9" viewBox="0 0 16 16" fill="none"><path d="M3 1v13" stroke="#2a9a3a" stroke-width="1.500"/><path d="M3 14h12" stroke="#d9201a" stroke-width="1.500"/><path d="M3 10h4v4" stroke="#333"/></symbol>
<symbol id="s10" viewBox="0 0 16 16" fill="none"><circle cx="8" cy="8" r="6.500" stroke="#333" stroke-width="1.500"/><path d="M14 8H7l5-5" stroke="#d9201a"/></symbol>
<symbol id="s11" viewBox="0 0 16 16" fill="none"><path d="M3 4h11v10H3z" stroke="#333" stroke-width="1.300"/><path d="M1 2h4v4H1z" fill="#fff" stroke="#d9201a" stroke-width="1.300"/></symbol>
<symbol id="s12" viewBox="0 0 16 16" fill="none" stroke="#333" stroke-width="1.500"><path d="M14 2 2 13h12M7 8l3 5"/></symbol>
<symbol id="s13" viewBox="0 0 16 16" stroke="#222"><path d="M1 3h4M7 3h8" stroke-width="1.500"/><path d="M1 8h9M12 8h3" stroke-width="2.500"/><path d="M1 13h5M8 13h7" stroke-width="3"/></symbol>
<symbol id="s14" viewBox="0 0 16 16" fill="none" stroke="#555" stroke-width="2.500"><circle cx="8" cy="4" r="2.500"/><path d="M4 9h8M5 15l1-5h4l1 5"/></symbol>
<symbol id="s15" viewBox="0 0 16 16" fill="#fff" stroke="#1f4f88" stroke-width="1.200"><path d="M1 2h14v9H1zM5 14.500h6M8 11v3"/><path d="m4 9 3-3M12 4 9 6.500M10 4h2v2M4 7v2h2" fill="none"/></symbol>
<symbol id="s16" viewBox="0 0 16 16" fill="#fff" stroke="#1f4f88" stroke-width="1.200"><path d="M1 2h9v6H1zM6 7h9v7H6z"/><path d="M1 2.500h9M6 8h9" stroke-width="2"/></symbol>
<symbol id="s17" viewBox="0 0 16 16" fill="#fff" stroke="#222" stroke-width="1.300"><circle cx="8" cy="8" r="6.500"/><path d="m8 9 4-4M6 13l7-6" stroke="#26a" stroke-width="1"/></symbol>
<symbol id="s18" viewBox="0 0 16 16"><circle cx="8" cy="8" r="7" fill="#3f9a3a" stroke="#7ab"/><path d="m4 8 3 3 5-6" fill="none" stroke="#fff" stroke-width="2"/></symbol>
</defs></svg>

<div class="urlbar d-flex align-items-center text-nowrap overflow-hidden"><svg class="i12 me-2"><use href="#lock"/></svg><span class="ms-1"><b>cafe.naver.com</b>/common/storyphoto/viewer.html?src=https%3A%2F%2Fcafeptthumb-phinf.pstatic.net%2FMjAyMDExMDVfMjM1%2FMDAxNjA0NTUzMjE3MTIx.mrL9ffJngE-gbz-gwoMjKMfGHxX2NY9U4S6OqRsQ1Iwg.TsMMmjLFZq3phJOMuAsUv...</span></div>

<button class="appbtn" aria-label="Application menu"><svg width="33" height="33" viewBox="0 0 33 33"><defs><linearGradient id="ag" x2="0" y2="1"><stop stop-color="#fff"/><stop offset="1" stop-color="#b4b7c2"/></linearGradient></defs><circle cx="16.500" cy="16.500" r="15.500" fill="url(#ag)" stroke="#70747f"/><path d="M16.500 3.500 29 16 16.500 29 4 16z" fill="#000"/><path d="M16.500 28V17.500h-2.500l-2-3.500h9v10z" fill="#fff"/></svg></button>

<header class="titlebar d-flex align-items-center">
 <div class="d-flex align-items-center gap-1">
  <button aria-label="New"><svg class="i14"><use href="#newd"/></svg></button><button aria-label="Open"><svg class="i14"><use href="#open"/></svg></button><button class="ms-1" aria-label="Save"><svg class="i14"><use href="#save"/></svg></button><button aria-label="Save as"><svg class="i14"><use href="#saveas"/></svg></button><button aria-label="Undo"><svg class="i14"><use href="#undo"/></svg></button><span class="caret"></span><button aria-label="Redo"><svg class="i14"><use href="#redo"/></svg></button><span class="caret"></span>
 </div>
 <div class="qcombo wspace d-flex align-items-center px-1 gap-1"><svg class="i12"><use href="#gear"/></svg><select class="flex-grow-1 text-nowrap" aria-label="Workspace"><option>Drafting and Annotation</option></select><span class="caret"></span></div>
 <div class="qcombo qlayer d-flex align-items-center px-1 gap-1"><svg class="i12"><use href="#bulb"/></svg><svg class="i12"><use href="#sun"/></svg><svg class="i12"><use href="#frz"/></svg><svg class="i12"><use href="#unl"/></svg><svg class="i12"><use href="#wsq"/></svg><select class="flex-grow-1" aria-label="Current layer"><option>0</option></select><span class="caret me-2"></span></div>
 <button class="ms-2" aria-label="Customize"><svg width="6" height="8" viewBox="0 0 6 8"><path d="M1 1h4M0 4h6L3 7z" stroke="#111" fill="#111"/></svg></button>
 <div class="apptitle flex-grow-1 text-center">CMS IntelliCAD 10.0x64 Premium Edition Plus&nbsp; - [도면1.dwg]</div>
 <div class="winbtns d-flex">
  <button aria-label="Minimize"><svg width="9" height="9"><path d="M0 4.500h9" stroke="#111"/></svg></button><button aria-label="Restore"><svg width="9" height="9" fill="none" stroke="#111"><path d="M.5 2.500h6v6h-6zM2.500 2.500v-2h6v6h-2"/></svg></button><button aria-label="Close"><svg width="10" height="10" stroke="#111"><path d="m1 1 8 8M9 1 1 9"/></svg></button>
 </div>
</header>

<nav class="apptabs d-flex" aria-label="Ribbon tabs">
 <a href="#" class="on w44">Home</a><a href="#" class="w44">Edit</a><a href="#" class="w44">Draw</a><a href="#" class="w64">Draw 3D</a><a href="#" class="w44">Insert</a><a href="#" class="w64">Annotate</a><a href="#" class="w50">View</a><a href="#" class="w50">Output</a><a href="#" class="w50">도구</a><a href="#" class="w72">Express Tools</a><a href="#" class="w64">도움말</a>
</nav>

<section class="ribbon d-flex">
 <div class="panelx pw1"><div class="pbody d-flex">
  <button class="big w34"><svg class="i26"><use href="#line"/></svg>선<span class="caret mt-1"></span></button>
  <button class="big w38"><svg class="i26"><use href="#pline"/></svg>폴리선</button>
  <button class="big w58"><svg class="i26"><use href="#circle"/></svg>원<span class="text-nowrap">중심-반지름<span class="caret"></span></span></button>
  <button class="big w38"><svg class="i26"><use href="#arc"/></svg>3점<span>호<span class="caret"></span></span></button>
  <div class="vsep"></div>
  <div class="ms-1"><button class="trow"><svg class="i14 me-1"><use href="#rect"/></svg><span class="caret"></span></button><button class="trow"><svg class="i14 me-1"><use href="#earc"/></svg><span class="caret"></span></button><button class="trow"><svg class="i14 me-1"><use href="#hatch"/></svg><span class="caret"></span></button></div>
 </div><div class="ptitle text-center">Draw<span class="caret ms-1"></span></div></div>

 <div class="panelx pw2"><div class="pbody d-flex ps-1">
  <div class="w40"><button class="trow"><svg class="i14"><use href="#move"/></svg>이동</button><button class="trow"><svg class="i14"><use href="#copy"/></svg>복사</button><button class="trow"><svg class="i14"><use href="#str"/></svg>신축</button></div>
  <div class="w40"><button class="trow"><svg class="i14"><use href="#rot"/></svg>회전</button><button class="trow"><svg class="i14"><use href="#mir"/></svg>대칭</button><button class="trow"><svg class="i14"><use href="#scale"/></svg>축척</button></div>
  <div class="w58"><button class="trow"><svg class="i14"><use href="#trim"/></svg>자르기</button><button class="trow w-100"><svg class="i14"><use href="#fil"/></svg>모깍기<span class="caret ms-auto"></span></button><button class="trow w-100"><svg class="i14"><use href="#array"/></svg>배열<span class="caret ms-auto"></span></button></div>
  <div class="ms-2"><button class="trow" aria-label="Erase"><svg class="i14"><use href="#del"/></svg></button><button class="trow" aria-label="Explode"><svg class="i14"><use href="#expl"/></svg></button><button class="trow" aria-label="Offset"><svg class="i14"><use href="#offset"/></svg></button></div>
 </div><div class="ptitle text-center">Modify<span class="caret ms-1"></span></div></div>

 <div class="panelx pw3"><div class="pbody d-flex">
  <button class="big w40"><svg class="i28"><use href="#layers"/></svg>Layers...</button>
  <div class="vsep"></div>
  <div class="flex-grow-1"><div class="d-flex flex-wrap" id="laybtns"></div>
   <div class="pcombo d-flex align-items-center gap-1 px-1"><svg class="i12"><use href="#bulb"/></svg><svg class="i12"><use href="#sun"/></svg><svg class="i12"><use href="#frz"/></svg><svg class="i12"><use href="#unl"/></svg><svg class="i12"><use href="#wsq"/></svg><select class="flex-grow-1" aria-label="Layer"><option>0</option></select><span class="caret"></span></div></div>
 </div><div class="ptitle text-center">Layers</div></div>

 <div class="panelx pw4"><div class="pbody d-flex">
  <button class="big w34"><svg class="i26"><use href="#bigA"/></svg>문자<span class="caret mt-1"></span></button>
  <div class="flex-grow-1"><button class="trow w-100"><svg class="i14"><use href="#dim"/></svg>선형<span class="caret ms-auto"></span></button><button class="trow w-100"><svg class="i14"><use href="#ctr"/></svg>중심 선<span class="caret ms-auto"></span></button><button class="trow"><svg class="i14"><use href="#adim"/></svg>Arc</button></div>
 </div><div class="ptitle text-center">Annotation<span class="caret ms-1"></span></div></div>

 <div class="panelx pw5"><div class="pbody d-flex">
  <button class="big w34"><svg class="i26"><use href="#blk"/></svg>블록<span>삽입...</span></button>
  <div class="ms-1"><button class="trow"><svg class="i14"><use href="#blkn"/></svg>블록 작성</button><button class="trow"><svg class="i14"><use href="#blke"/></svg>Block Editor</button><button class="trow"><svg class="i14"><use href="#blka"/></svg>블록 속성 편집</button></div>
 </div><div class="ptitle text-center">Block<span class="caret ms-1"></span></div></div>

 <div class="panelx pw6"><div class="pbody d-flex gap-1">
  <div><div class="trow"><svg class="i14"><use href="#wheel"/></svg></div><div class="trow"><svg class="i14"><use href="#ltyp"/></svg></div><div class="trow"><svg class="i14"><use href="#lwt"/></svg></div></div>
  <div class="flex-grow-1">
   <div class="pcombo d-flex align-items-center gap-1 ps-1"><span class="colorbox"></span><select class="flex-grow-1" aria-label="Color"><option>BYLAYER</option></select><span class="caret"></span></div>
   <div class="pcombo d-flex align-items-center gap-1 ps-1"><span class="rule"></span><select class="flex-grow-1" aria-label="Linetype"><option>BYLAYER</option></select><span class="caret"></span></div>
   <div class="pcombo d-flex align-items-center gap-1 ps-1"><span class="rule"></span><select class="flex-grow-1" aria-label="Lineweight"><option>BYLAYER</option></select><span class="caret"></span></div></div>
 </div><div class="ptitle text-center">Properties<span class="caret ms-1"></span><svg class="position-absolute end-0 top-0 m-1" width="7" height="7" fill="none" stroke="#555"><path d="M.5 5V.5H5M3 3l3 3M6.500 3v3.500H3"/></svg></div></div>

 <div class="panelx pw7"><div class="pbody d-flex">
  <button class="big w34"><svg class="i26"><use href="#grp"/></svg>그룹...</button>
  <button class="big w34"><svg class="i26"><use href="#meas"/></svg>측정<span class="caret mt-1"></span></button>
  <div class="ms-1"><button class="trow" aria-label="Filter"><svg class="i14"><use href="#fun"/></svg></button><button class="trow" aria-label="Select"><svg class="i14"><use href="#gb"/></svg></button><button class="trow" aria-label="Audit"><svg class="i14"><use href="#dchk"/></svg></button></div>
 </div><div class="ptitle text-center">Utilities<span class="caret ms-1"></span></div></div>

 <div class="panelx pw8"><div class="pbody d-flex">
  <button class="big w40 text-nowrap"><svg class="i26"><use href="#paste"/></svg>붙여넣기</button>
  <div class="ms-1"><button class="trow" aria-label="Cut"><svg class="i14"><use href="#scis"/></svg></button><button class="trow" aria-label="Copy"><svg class="i14"><use href="#cdoc"/></svg></button><button class="trow" aria-label="Match"><svg class="i14"><use href="#brush"/></svg></button></div>
 </div><div class="ptitle text-center">Clipboard</div></div>
</section>

<main class="d-flex flex-grow-1 overflow-hidden">
 <aside class="sidebar side-l"><div class="dots"></div><div class="tgroup g1" data-tools="line pline par spl free | circle arc ellipse earc | pt | helix rect rgn cloud | donut wipe mline | blk | hatch undA smA"></div><div class="dots mt-3"></div><div class="tgroup g2" data-tools="regen | hand z1 z2 z3 z4 z5 z6 z7 | z8 z9"></div></aside>
 <div class="d-flex flex-column flex-grow-1 overflow-hidden">
  <div class="doctabs d-flex align-items-center pe-2">
   <button class="doctab cutl">Start Page</button><button class="doctab cutl pe-1"><span>도면1.dwg</span><svg width="8" height="8" stroke="#111"><path d="m1 1 6 6M7 1 1 7"/></svg></button><button class="ms-2" aria-label="New tab"><svg width="9" height="9" stroke="#111" stroke-width="2"><path d="M4.500 0v9M0 4.500h9"/></svg></button>
   <span class="caret ms-auto"></span>
  </div>
  <div class="d-flex flex-grow-1 overflow-hidden">
   <section class="props d-flex flex-column overflow-hidden flex-shrink-0">
    <div class="ptop d-flex align-items-center flex-shrink-0"><span class="grip"></span>Properties</div>
    <div class="d-flex align-items-center flex-shrink-0 selrow">
     <div class="selbox d-flex align-items-center"><select class="flex-grow-1" aria-label="Selection"><option>No selection</option></select><svg width="8" height="5" fill="none" stroke="#444"><path d="m1 1 3 3 3-3"/></svg></div>
     <button class="sq20" aria-label="Categories"><svg class="i14"><use href="#tree"/></svg></button><button class="sq20" aria-label="Toggle pick add"><svg class="i14"><use href="#selp"/></svg></button><button class="sq20" aria-label="Select"><svg class="i14"><use href="#qs"/></svg></button><button class="sq20" aria-label="Quick select"><svg class="i14"><use href="#fun"/></svg></button>
    </div>
    <div class="d-flex flex-grow-1 overflow-hidden"><div class="pscroll"></div><div id="sections"></div></div>
   </section>
   <div class="edge"></div>
   <section class="d-flex flex-column flex-grow-1 overflow-hidden">
    <div class="canvasx flex-grow-1 overflow-hidden">
     <svg width="100%" height="100%" role="img" aria-label="Model space">
      <g id="grid" fill="none"></g>
      <path d="M6.500 0v549" stroke="#0b6a0b"/><path d="M0 549.500h6" stroke="#0b5c0b"/><path d="M6 549.500h3000" stroke="#780808"/>
      <path d="M43 377.500h86" stroke="#d01818"/><path d="M85.500 335v85" stroke="#22c822"/><circle cx="85.500" cy="377.500" r="2.500" fill="none" stroke="#c86a10"/>
      <g fill="none"><path d="M28.500 607v-53M22.500 554.500l6-18 6 18z" stroke="#12b812"/><path d="M28 607.500h53M81.500 601.500l18 6-18 6z" stroke="#d01414"/><path d="M22.500 601.500h12v12h-12z" stroke="#e8e8e8"/></g>
      <g fill="#ddd" font-family="Liberation Sans" font-size="16"><text x="23" y="524">Y</text><text x="112" y="613">X</text></g>
     </svg>
    </div>
    <div class="laytabs d-flex align-items-center flex-shrink-0">
     <button aria-label="First"><svg width="8" height="8"><path d="M1 0v8M7 0v8L2.500 4z" stroke="#111"/></svg></button><button aria-label="Previous"><svg width="8" height="8"><path d="M6 0v8L2 4z"/></svg></button><button aria-label="Next"><svg width="8" height="8"><path d="M2 0v8l4-4z"/></svg></button><button aria-label="Last"><svg width="8" height="8"><path d="M7 0v8M1 0v8l4.500-4z" stroke="#111"/></svg></button>
     <div class="d-flex bg-white"><svg class="slash" stroke="#111"><path d="m3 1 5 11"/></svg><a href="#" class="fw-bold">Model</a><svg class="slash" stroke="#111" fill="none"><path d="M8 0 3 12M5 7l3 5"/></svg><a href="#" class="ps-1">Layout1</a><svg class="slash ms-1" stroke="#111" fill="none"><path d="m3 0 5 12M5 6l-3 6"/></svg><a href="#" class="ps-1">Layout2</a><svg class="slash" stroke="#111"><path d="M8 0 3 12"/></svg></div>
    </div>
   </section>
   <div class="edge"></div>
   <section class="palette d-flex flex-column flex-shrink-0 overflow-hidden">
    <div class="ptop d-flex align-items-center flex-shrink-0"><span class="grip"></span>Tool Palettes − All Pale...</div>
    <div class="d-flex flex-grow-1 overflow-hidden">
     <div class="vt d-flex flex-column"><button class="on">수정</button><button>조회</button><button>뷰</button><button>3D Orbit</button><button>Draw Order</button><button>Walls</button><button>Doors</button><button>Windows</button><button>Stairs</button><button>Railings</button><button>Steel</button></div>
     <ul class="plist d-flex flex-column flex-grow-1 border-start border-top border-secondary" id="plist"></ul>
     <div class="track d-flex flex-column align-items-center justify-content-between py-1"><svg width="9" height="12" fill="none" stroke="#333" stroke-width="1.500"><path d="m1 8 3.500-3.500L8 8"/></svg><div class="thumbx w-100"></div><div class="flex-grow-1"></div><svg width="9" height="8" fill="none" stroke="#333" stroke-width="1.500"><path d="m1 2 3.500 3.500L8 2"/></svg></div>
    </div>
   </section>
  </div>
 </div>
 <aside class="side30"><div class="sidebar side-r overflow-hidden"><div class="dots"></div><div class="tgroup g3" data-tools="move copy offset scale del | rot rot3 | mir mir3 | array array3 | brk joi trim | flat | align | ext | meas | fil | pe1 pe2 pe3 | expl explp | ord ord2 prop*"></div></div></aside>
</main>

<section class="cmd d-flex flex-shrink-0">
 <div class="gut d-flex flex-column align-items-center gap-2 pt-1 flex-shrink-0"><button class="mt-1" aria-label="Close command bar"><svg width="7" height="7" stroke="#111" stroke-width="1.300"><path d="m1 1 5 5M6 1 1 6"/></svg></button><span class="caret"></span></div>
 <div class="flex-grow-1"><div class="d-flex log"><div class="flex-grow-1">Command: '_CMDBAR
[Show/Hide/Toggle/Floating/Lower/Upper]/&lt;Hide Command Bar&gt;: _T
Command: '_CMDBAR
[Show/Hide/Toggle/Floating/Lower/Upper]/&lt;Show Command Bar&gt;: _T</div>
  <div class="logbar d-flex flex-column align-items-center justify-content-between"><svg width="8" height="14" fill="none" stroke="#333" stroke-width="1.500"><path d="m1 10 3-3 3 3"/></svg><div></div><svg width="8" height="12" fill="none" stroke="#333" stroke-width="1.500"><path d="m1 4 3 3 3-3"/></svg></div></div>
  <div class="cline d-flex"><label for="cmd">Command:</label><input id="cmd" class="flex-grow-1 ms-1" type="text"></div></div>
</section>

<footer class="status d-flex flex-shrink-0"><span class="ps-1 flex-grow-1">준비</span><span class="coord">1.5007,3.3007,0.0000</span><div class="d-flex" id="stat"></div></footer>

<script>
const ic=(n,c)=>`<svg class="${c}" aria-hidden="true"><use href="#${n}"/></svg>`;
// drawing grid: every fifth line is a major one, counted from the origin at (6, 549)
const step=25.7,lines={minor:'',major:''};
for(let k=-1;k<110;k++)lines[k%5?'minor':'major']+=`M${Math.round(6+k*step)+.5} 0v2000`;
for(let k=-40;k<30;k++)lines[k%5?'minor':'major']+=`M0 ${Math.round(549-k*step)+.5}h3000`;
document.getElementById('grid').innerHTML=`<path d="${lines.minor}" stroke="#181818"/><path d="${lines.major}" stroke="#2c2c2c"/>`;
// docked toolbars: "|" is a separator, "*" marks the pressed tool
document.querySelectorAll('[data-tools]').forEach(el=>{el.innerHTML=el.dataset.tools.split(' ').map(t=>t==='|'?'<hr>':`<button class="${t.endsWith('*')?'on':''}" aria-label="${t.replace('*','')}">${ic(t.replace('*',''),'i14')}</button>`).join('')});
document.getElementById('laybtns').innerHTML=Array.from({length:14},(_,i)=>`<button class="lbtn" aria-label="Layer tool ${i+1}">${ic('l'+(i+1),'i14')}</button>`).join('');
// property sections: a leading "~" marks a read-only value
const sections=[['General',[['Color','<span class="swatch"></span>ByLayer'],['Layer','0'],['Linetype','<span class="dash"></span>ByLayer'],['Linetype scale','1.0000'],['Lineweight','<span class="dash"></span>ByLayer'],['Thickness','0'],['Transparency','ByLayer']]],
['3D Visualization',[['Material','ByLayer'],['Shadow display','~Shadows cast and...']]],
['Print style',[['Print style','~ByColor'],['Print style table',''],['Print table attache...','~Model'],['Print table type','~Color-dependent p...']]],
['View',[['Center X','~10.4386'],['Center Y','~4.5000'],['Center Z','~0'],['Width','~15.6976'],['Height','~9.1800']]],
['Visual Style',[['Visual style','2D Wireframe'],['Backgrounds','On'],['Edge jitter','-2'],['Edge smoothing','1'],['Material mode','None'],['Halo gap','0'],['Face opacity','-60'],['Face style','None'],['Face highlight','-30']]]];
document.getElementById('sections').innerHTML=sections.map(([h,r])=>`<button class="sec">${h}<span class="up"></span></button><table class="ptab"><tbody>${r.map(([k,v])=>`<tr><th scope="row">${k}</th><td class="${v[0]==='~'?'ro':''}">${v.replace('~','')}</td></tr>`).join('')}</tbody></table>`).join('');
document.getElementById('plist').innerHTML=[['move','이동'],['copy','복사'],['offset','Offset'],['scale','축척'],['del','삭제'],['rot','회전'],['rot3','3D 회전'],['mir','대칭'],['mir3','3D 대칭'],['array','배열'],['array3','3D 배열'],['brk','중단'],['joi','결합'],['trim','자르기'],['flat','평탄화'],['align','정렬'],['ext','연장'],['len','길이 편집'],['str','신축'],['fil','모깍기']].map(([i,t])=>`<li>${ic(i,'i26')}<span>${t}</span></li>`).join('');
document.getElementById('stat').innerHTML='s1* s2 s3 =1:1 s4* s5 s6 s7* s8* s9 s10 s11* s12* s13 =모델(모형) =TABLET gear s14 s15 s16 s17* s18'.split(' ').map(t=>t[0]==='='?`<button class="txt ${t==='=TABLET'?'s text-secondary':t==='=1:1'?'one':''}">${t.slice(1)}</button>`:`<button class="${t.endsWith('*')?'on':''}" aria-label="${t.replace('*','')}">${ic(t.replace('*',''),'i16')}</button>`).join('');
</script>
</body>
</html>
